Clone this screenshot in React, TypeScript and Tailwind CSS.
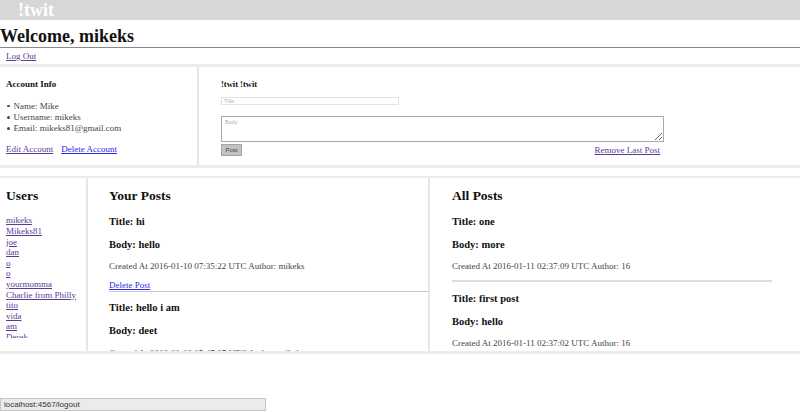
import React from "react";

const users = ["mikeks", "Mikeks81", "joe", "dan", "o", "o", "yourmomma", "Charlie from Philly", "tito", "vida", "am", "Derek"];

const yourPosts = [
  { title: "hi", body: "hello", created: "2016-01-10 07:35:22 UTC", author: "mikeks" },
  { title: "hello i am", body: "deet", created: "2016-01-10 05:47:07 UTC", author: "mikeks" },
];

const allPosts = [
  { title: "one", body: "more", created: "2016-01-11 02:37:09 UTC", author: "16" },
  { title: "first post", body: "hello", created: "2016-01-11 02:37:02 UTC", author: "16" },
  { title: "hey", body: "there", created: "2016-01-11 02:30:41 UTC", author: "16" },
];

const visited = "text-[#5b3a94] underline";
const fresh = "text-[#2b2be6] underline";

export default function App() {
  return (
    <div className="relative w-[800px] h-[412px] overflow-hidden bg-white font-['Liberation_Serif',serif] text-[#111]">
      <div className="h-[20px] bg-[#d8d7d8] pl-[18px] text-[18px] font-bold leading-[21px] text-white">!twit</div>

      <h1 className="h-[28px] border-b border-[#8a8a8a] pt-[5px] text-[18px] font-bold leading-[22px]">Welcome, mikeks</h1>

      <div className="h-[16px] pl-[6px] text-[9px] leading-[16px]">
        <a href="#" className={visited}>Log Out</a>
      </div>

      {/* account + new post */}
      <div className="flex h-[104px] border-y-[3px] border-[#ececec]">
        <div className="w-[199px] border-r-2 border-[#e6e6e6] pl-[6px] pt-[12px]">
          <h4 className="text-[9px] font-bold leading-[11px]">Account Info</h4>
          <ul className="mt-[10.5px] text-[9px] leading-[11.2px] text-[#444]">
            {["Name: Mike", "Username: mikeks", "Email: mikeks81@gmail.com"].map((t) => (
              <li key={t} className="flex items-center gap-[4px]">
                <span className="ml-[1px] h-[2.5px] w-[2.5px] rounded-full bg-[#444]" />
                {t}
              </li>
            ))}
          </ul>
          <div className="mt-[10px] flex gap-[8px] text-[9px] leading-[11px]">
            <a href="#" className={visited}>Edit Account</a>
            <a href="#" className={fresh}>Delete Account</a>
          </div>
        </div>

        <div className="flex-1 pl-[22px] pt-[12px]">
          <h4 className="text-[8.5px] font-bold leading-[11px]">!twit !twit</h4>
          <div className="w-[443px]">
            <input
              placeholder="Title"
              className="mt-[6.5px] block h-[8.5px] w-[178px] border border-[#e2e2e2] bg-white px-[2px] font-['Liberation_Sans',sans-serif] text-[5.5px] outline-none placeholder:text-[#b0b0b0]"
            />
            <textarea
              placeholder="Body"
              className="mt-[11px] block h-[26px] w-[443px] border border-[#a9a9a9] bg-white px-[3px] py-[1px] font-['Liberation_Sans',sans-serif] text-[5.5px] leading-[8px] outline-none placeholder:text-[#b0b0b0]"
            />
            <div className="mt-[2px] flex items-start justify-between">
              <button className="h-[12px] w-[21px] border border-[#a5a5a5] bg-[#c2c2c2] font-['Liberation_Sans',sans-serif] text-[6px] leading-[10px] text-[#444]">
                Post
              </button>
              <a href="#" className={`${visited} mr-[4px] mt-[1px] text-[9px] leading-[11px]`}>Remove Last Post</a>
            </div>
          </div>
        </div>
      </div>

      <div className="h-[8px]" />

      {/* users + posts */}
      <div className="flex h-[178px] overflow-hidden border-t-2 border-b-[3px] border-[#ececec]">
        <div className="w-[88px] shrink-0 border-r-2 border-[#e6e6e6] pl-[6px] pt-[10px]">
          <h2 className="text-[13.5px] font-bold leading-[16px]">Users</h2>
          <div className="mt-[11.4px] h-[123px] overflow-hidden text-[9px] leading-[10.6px]">
            {users.map((u, i) => (
              <div key={i}>
                <a href="#" className={visited}>{u}</a>
              </div>
            ))}
          </div>
        </div>

        <div className="w-[342px] shrink-0 overflow-hidden border-r-2 border-[#e6e6e6] pl-[21px] pt-[10px]">
          <h2 className="text-[13.5px] font-bold leading-[16px]">Your Posts</h2>
          {yourPosts.map((p, i) => (
            <div key={i} className={i === 0 ? "mt-[11.7px]" : "pt-[10px]"}>
              <h3 className="text-[10.5px] font-bold leading-[12px]">Title: {p.title}</h3>
              <h3 className="mt-[11px] text-[10.5px] font-bold leading-[12px]">Body: {p.body}</h3>
              <p className="mt-[10.5px] text-[9px] leading-[11px] text-[#444]">
                Created At {p.created} Author: {p.author}
              </p>
              <div className="mt-[8.3px] text-[9px] leading-[11px]">
                <a href="#" className={fresh}>Delete Post</a>
              </div>
              <div className="border-t border-[#c8c8c8]" />
            </div>
          ))}
        </div>

        <div className="flex-1 overflow-hidden pl-[22px] pr-[28px] pt-[10px]">
          <h2 className="text-[13.5px] font-bold leading-[16px]">All Posts</h2>
          {allPosts.map((p, i) => (
            <div key={i} className={i === 0 ? "mt-[11.7px]" : "mt-[11px]"}>
              <h3 className="text-[10.5px] font-bold leading-[12px]">Title: {p.title}</h3>
              <h3 className="mt-[11px] text-[10.5px] font-bold leading-[12px]">Body: {p.body}</h3>
              <p className="mt-[10.5px] text-[9px] leading-[11px] text-[#444]">
                Created At {p.created} Author: {p.author}
              </p>
              <div className="mt-[7.5px] h-[2px] bg-[#dedede]" />
            </div>
          ))}
        </div>
      </div>

      {/* browser status bubble */}
      <div className="absolute bottom-[1px] left-0 h-[13px] w-[266px] border border-[#c6c6c6] bg-[#ebebeb] pl-[3px] font-['Liberation_Sans',sans-serif] text-[8px] leading-[11px] text-[#333]">
        localhost:4567/logout
      </div>
    </div>
  );
}
